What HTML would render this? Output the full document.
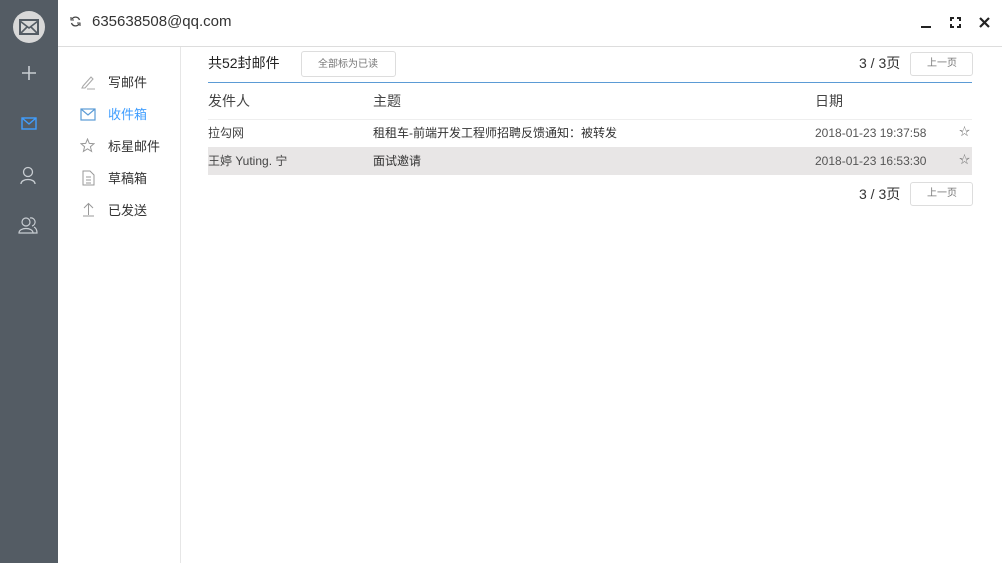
<!DOCTYPE html>
<html><head><meta charset="utf-8"><style>
*{margin:0;padding:0;box-sizing:border-box}
body{width:1002px;height:563px;background:#fff;font-family:"Liberation Sans","Noto Sans CJK SC",sans-serif;color:#333;position:relative;overflow:hidden}
.side{position:absolute;left:0;top:0;width:58px;height:563px;background:#545c64}
.abs{position:absolute}
.hdr{position:absolute;left:58px;top:0;right:0;height:47px;border-bottom:1px solid #ddd}
.nav{position:absolute;left:58px;top:47px;width:123px;bottom:0;border-right:1px solid #e6e6e6}
.nav div{position:absolute;left:50px;font-size:13px;color:#333;line-height:16px}
.t{position:absolute;white-space:nowrap;line-height:1.2}
.btn{position:absolute;border:1px solid #ddd;border-radius:3px;background:#fff}
.bt{position:absolute;font-size:10px;color:#777;line-height:12px;white-space:nowrap}
</style></head><body>
<div class="side">
 <div class="abs" style="left:13px;top:11px;width:32px;height:32px;border-radius:50%;background:#d8d8d8"></div>
 <svg class="abs" style="left:19px;top:19px" width="20" height="16" viewBox="0 0 20 16"><rect x="1" y="1" width="18" height="14" fill="none" stroke="#545c64" stroke-width="2"/><path d="M1 2 L10 9 L19 2 M1 15 L8 8 M19 15 L12 8" fill="none" stroke="#545c64" stroke-width="1.6"/></svg>
 <svg class="abs" style="left:21px;top:65px" width="16" height="16"><path d="M8 1V15M1 8H15" stroke="#c8cdd2" stroke-width="1.6"/></svg>
 <svg class="abs" style="left:21px;top:117px" width="16" height="13"><rect x="1" y="1" width="14" height="11" fill="none" stroke="#409eff" stroke-width="1.4"/><path d="M1 1L8 7L15 1" fill="none" stroke="#409eff" stroke-width="1.4"/></svg>
 <svg class="abs" style="left:20px;top:166px" width="16" height="18"><circle cx="8" cy="6" r="4.5" fill="none" stroke="#c8cdd2" stroke-width="1.3"/><path d="M1 18C1 12 15 12 15 18" fill="none" stroke="#c8cdd2" stroke-width="1.3"/></svg>
 <svg class="abs" style="left:18px;top:216px" width="20" height="18"><circle cx="8" cy="6" r="4" fill="none" stroke="#c8cdd2" stroke-width="1.2"/><path d="M1 17C1 11 15 11 15 17Z" fill="none" stroke="#c8cdd2" stroke-width="1.2"/><path d="M12 2A4 4 0 0 1 14 10M16 11C18 12 19 14 19 17H15" fill="none" stroke="#c8cdd2" stroke-width="1.2"/></svg>
</div>
<div class="hdr">
 <svg class="abs" style="left:12px;top:16px" width="11" height="11" viewBox="0 0 11 11"><path d="M9.5 4A4.2 4.2 0 0 0 2 3M1.5 7A4.2 4.2 0 0 0 9 8" fill="none" stroke="#444" stroke-width="1.3"/><path d="M1 1V4H4M10 10V7H7" fill="none" stroke="#444" stroke-width="1.1"/></svg>
 <div class="t" style="left:34px;top:13px;font-size:15px;color:#333">635638508@qq.com</div>
 <div class="abs" style="left:863px;top:26px;width:10px;height:2px;background:#222"></div>
 <svg class="abs" style="left:892px;top:17px" width="11" height="11"><path d="M1 4V1H4M7 1H10V4M10 7V10H7M4 10H1V7" fill="none" stroke="#222" stroke-width="2"/></svg>
 <svg class="abs" style="left:921px;top:17px" width="11" height="11"><path d="M1 1L10 10M10 1L1 10" stroke="#222" stroke-width="2.2"/></svg>
</div>
<div class="nav">
 <svg class="abs" style="left:22px;top:27px" width="16" height="16"><path d="M3 12L11 3L13 5L5 14L2 14Z" fill="none" stroke="#aaa" stroke-width="1.1"/><path d="M7 15H15" stroke="#aaa"/></svg>
 <div style="top:28px">写邮件</div>
 <svg class="abs" style="left:22px;top:61px" width="16" height="13"><rect x="1" y="1" width="14" height="11" fill="none" stroke="#5b9bd5" stroke-width="1.2"/><path d="M1 1L8 7L15 1" fill="none" stroke="#5b9bd5" stroke-width="1.2"/></svg>
 <div style="top:60px;color:#409eff">收件箱</div>
 <svg class="abs" style="left:22px;top:91px" width="15" height="15" viewBox="0 0 15 15"><path d="M7.5 1L9.3 5.4L14 5.7L10.4 8.7L11.6 13.4L7.5 10.8L3.4 13.4L4.6 8.7L1 5.7L5.7 5.4Z" fill="none" stroke="#999" stroke-width="1"/></svg>
 <div style="top:92px">标星邮件</div>
 <svg class="abs" style="left:24px;top:123px" width="13" height="16"><path d="M1 1H8L12 5V15H1Z M4 7H9M4 10H9M4 13H9" fill="none" stroke="#999" stroke-width="1"/></svg>
 <div style="top:124px">草稿箱</div>
 <svg class="abs" style="left:24px;top:155px" width="13" height="15"><path d="M6.5 13V2M2 6L6.5 1.5L11 6M1 14H12" fill="none" stroke="#999" stroke-width="1"/></svg>
 <div style="top:156px">已发送</div>
</div>
<div class="t" style="left:208px;top:55px;font-size:14px;color:#222">共52封邮件</div>
<div class="btn" style="left:301px;top:51px;width:95px;height:26px"></div>
<div class="bt" style="left:318px;top:59px">全部标为已读</div>
<div class="t" style="left:859px;top:55px;font-size:14px;color:#333">3 / 3页</div>
<div class="btn" style="left:910px;top:52px;width:63px;height:24px"></div>
<div class="bt" style="left:927px;top:58px">上一页</div>
<div class="abs" style="left:208px;top:82px;width:764px;height:1px;background:#5b9bd5"></div>
<div class="t" style="left:208px;top:93px;font-size:14px;color:#444">发件人</div>
<div class="t" style="left:373px;top:93px;font-size:14px;color:#444">主题</div>
<div class="t" style="left:815px;top:93px;font-size:14px;color:#444">日期</div>
<div class="abs" style="left:208px;top:119px;width:764px;height:1px;background:#eee"></div>
<div class="t" style="left:208px;top:126px;font-size:12px;color:#444">拉勾网</div>
<div class="t" style="left:373px;top:126px;font-size:12px;color:#333">租租车-前端开发工程师招聘反馈通知：被转发</div>
<div class="t" style="left:815px;top:126px;font-size:12px;color:#555">2018-01-23 19:37:58</div>
<div class="t" style="left:959px;top:126px;font-size:11px;color:#777">☆</div>
<div class="abs" style="left:208px;top:147px;width:764px;height:28px;background:#e8e6e6"></div>
<div class="t" style="left:208px;top:154px;font-size:12px;color:#444">王婷 Yuting. 宁</div>
<div class="t" style="left:373px;top:154px;font-size:12px;color:#333">面试邀请</div>
<div class="t" style="left:815px;top:154px;font-size:12px;color:#555">2018-01-23 16:53:30</div>
<div class="t" style="left:959px;top:154px;font-size:11px;color:#777">☆</div>
<div class="t" style="left:859px;top:186px;font-size:14px;color:#333">3 / 3页</div>
<div class="btn" style="left:910px;top:182px;width:63px;height:24px"></div>
<div class="bt" style="left:927px;top:188px">上一页</div>
</body></html>
